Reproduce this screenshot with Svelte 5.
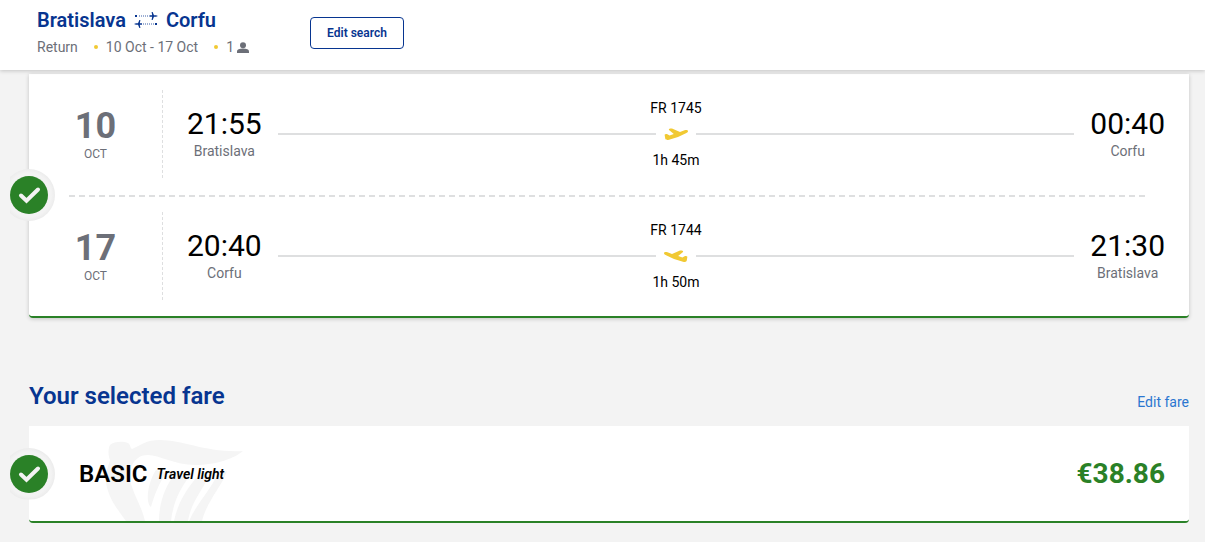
<script>
  const trip = {
    from: "Bratislava",
    to: "Corfu",
    type: "Return",
    dates: "10 Oct - 17 Oct",
    passengers: 1,
  };

  const legs = [
    {
      day: "10",
      month: "OCT",
      departs: "21:55",
      from: "Bratislava",
      arrives: "00:40",
      to: "Corfu",
      flight: "FR 1745",
      duration: "1h 45m",
    },
    {
      day: "17",
      month: "OCT",
      departs: "20:40",
      from: "Corfu",
      arrives: "21:30",
      to: "Bratislava",
      flight: "FR 1744",
      duration: "1h 50m",
      inbound: true,
    },
  ];

  const fare = { name: "BASIC", tagline: "Travel light", price: "€38.86" };
</script>

{#snippet tick()}
  <span class="tick">
    <svg viewBox="0 0 38 38" width="38" height="38" aria-hidden="true">
      <circle cx="19" cy="19" r="19" fill="#2a8127" />
      <path
        d="M11 19.500l5.500 5.300L28 13.500"
        fill="none"
        stroke="#f3f3f3"
        stroke-width="4"
        stroke-linecap="round"
      />
    </svg>
  </span>
{/snippet}

<header class="header">
  <div class="trip">
    <h1 class="route">
      <span>{trip.from}</span>
      <svg viewBox="0 0 24 16" width="24" height="16" aria-hidden="true">
        <g fill="#073590">
          <path d="M1 3h2v2H1zM21 11h2v2h-2z" />
          <path d="M24 4l-2 .8h-2L18.600 8h-1l.6-3.200H16V3.200h2.200L17.600 0h1L20 3.200h2z" />
          <path d="M0 12l2-.8h2L5.400 8h1l-.6 3.200H8v1.600H5.800L6.400 16h-1L4 12.800H2z" />
        </g>
        <path
          d="M5 4h11M9 12h11"
          stroke="#073590"
          stroke-opacity=".4"
          stroke-width="2"
          stroke-dasharray="1 1"
        />
      </svg>
      <span>{trip.to}</span>
    </h1>
    <ul class="details">
      <li>{trip.type}</li>
      <li>{trip.dates}</li>
      <li>
        {trip.passengers}
        <svg viewBox="0 0 12 12" width="12" height="12" aria-label="passenger">
          <g fill="#6c6f78">
            <circle cx="6" cy="4.200" r="3" />
            <path d="M6 7.600c3.600 0 6 1 6 2.600V12H0v-1.800c0-1.600 2.400-2.600 6-2.600z" />
          </g>
        </svg>
      </li>
    </ul>
  </div>
  <button class="edit-search" type="button">Edit search</button>
</header>

<main>
  <section class="card flights">
    {#each legs as leg, i}
      {#if i > 0}
        <hr class="divider" />
      {/if}
      <div class="leg">
        <div class="date">
          <span class="day">{leg.day}</span>
          <span class="month">{leg.month}</span>
        </div>
        <div class="place">
          <span class="time">{leg.departs}</span>
          <span class="city">{leg.from}</span>
        </div>
        <div class="flight">
          <span>{leg.flight}</span>
          <div class="path">
            <svg
              class:inbound={leg.inbound}
              viewBox="0 0 24 12"
              width="24"
              height="12"
              aria-hidden="true"
            >
              <path
                d="M.6 6.800C1 6 2.500 5.800 3.400 6.300L5.600 7.400 9.800 5.900 5 2C4.400 1 6 .4 8 .6L16 4 20.500 2.300C22.300 1.700 24 2 24 3.200 24 4.200 22.800 4.900 21.400 5.500L14 9 5 11.700C3.200 12.200 1.800 12 1.300 10.800z"
                fill="#f1c933"
              />
            </svg>
          </div>
          <span>{leg.duration}</span>
        </div>
        <div class="place">
          <span class="time">{leg.arrives}</span>
          <span class="city">{leg.to}</span>
        </div>
      </div>
    {/each}
    {@render tick()}
  </section>

  <div class="fare-header">
    <h2>Your selected fare</h2>
    <a href="#fare">Edit fare</a>
  </div>

  <section class="card fare" id="fare">
    <svg class="harp" viewBox="0 0 138 82" width="138" height="82" aria-hidden="true">
      <g fill="#f5f5f5">
        <path
          d="M5 6C9 2 19 2 23 4C26 6 25 9 27 10C36 6 41 1 55 1C78 1 102 14 138 12C130 19 112 26 90 26C70 26 54 16 43 16C34 16 30 21 27 26C25 33 24 41 27 48C31 60 37 69 40 82H21C14 72 4 61 1 44C0 34 3 29 5 21C3 16 3 10 5 6z"
        />
        <path d="M51 31L61 34C54 44 49 57 46 68C40 63 43 43 51 31z" />
        <path d="M70 35L84 38C74 51 68 65 66 82H54C54 64 60 47 70 35z" />
        <path d="M92 38L104 37C96 53 86 64 83 82H69C73 63 82 50 92 38z" />
        <path d="M112 36L122 32C117 47 102 62 97 82H84C92 64 105 52 112 36z" />
      </g>
    </svg>
    <h3>{fare.name}</h3>
    <em>{fare.tagline}</em>
    <strong class="price">{fare.price}</strong>
    {@render tick()}
  </section>
</main>

<style>
  :global(body) {
    background: #f3f3f3;
    font-family: Roboto, "Liberation Sans", sans-serif;
    font-size: 14px;
    line-height: 20px;
    color: #000;
  }

  h1,
  h2,
  h3,
  ul,
  hr {
    margin: 0;
    padding: 0;
  }

  svg {
    display: block;
  }

  .header {
    position: relative;
    z-index: 1;
    display: flex;
    align-items: flex-start;
    padding: 8px 37px 13px;
    background: #fff;
    box-shadow: 0 1px 4px rgba(0, 0, 0, 0.2);
  }

  .trip {
    width: 273px;
  }

  .route {
    display: flex;
    align-items: center;
    gap: 8px;
    font-size: 20px;
    line-height: 24px;
    font-weight: 600;
    color: #073590;
  }

  .details {
    display: flex;
    margin-top: 5px;
    color: #6c6f78;
    list-style: none;
  }

  .details li {
    display: flex;
    align-items: center;
    gap: 3px;
  }

  .details li + li::before {
    content: "";
    width: 4px;
    height: 4px;
    margin: 0 5px 0 16px;
    border-radius: 50%;
    background: #f1c933;
  }

  .edit-search {
    box-sizing: border-box;
    width: 94px;
    height: 32px;
    margin-top: 9px;
    padding: 0;
    border: 1px solid #073590;
    border-radius: 4px;
    background: #fff;
    color: #073590;
    font: 600 12px Roboto, "Liberation Sans", sans-serif;
    cursor: pointer;
  }

  main {
    padding: 4px 16px 19px 29px;
  }

  .card {
    position: relative;
    background: #fff;
    border-bottom: 2px solid #2a8127;
    border-radius: 0 0 4px 4px;
  }

  .flights {
    padding: 16px 24px 16px 0;
    box-shadow: 0 1px 4px rgba(0, 0, 0, 0.2);
  }

  .leg {
    display: flex;
    height: 88px;
  }

  .divider {
    height: 2px;
    margin: 17px 16px 15px 40px;
    border: 0;
    background: repeating-linear-gradient(90deg, #dedfe0 0 6px, transparent 6px 10px);
  }

  .date {
    display: flex;
    flex-direction: column;
    align-items: center;
    justify-content: center;
    box-sizing: border-box;
    width: 134px;
    border-right: 1px dashed #dedfe0;
    color: #6c6f78;
  }

  .day {
    font-size: 36px;
    line-height: 40px;
    font-weight: 700;
  }

  .month {
    font-size: 12px;
    line-height: 16px;
  }

  .place {
    display: flex;
    flex-direction: column;
    align-items: center;
    padding-top: 14px;
  }

  .date + .place {
    margin-left: 24px;
  }

  .time {
    font-size: 30px;
    line-height: 40px;
  }

  .city {
    line-height: 14px;
    color: #6c6f78;
  }

  .flight {
    flex: 1;
    display: flex;
    flex-direction: column;
    align-items: center;
    justify-content: center;
    margin: 0 16px;
  }

  .path {
    display: flex;
    align-items: center;
    gap: 8px;
    align-self: stretch;
    height: 32px;
  }

  .path::before,
  .path::after {
    content: "";
    flex: 1;
    height: 2px;
    background: #dedfe0;
  }

  .inbound {
    transform: scaleX(-1);
  }

  .tick {
    position: absolute;
    top: 50%;
    left: -26px;
    box-sizing: border-box;
    width: 52px;
    height: 52px;
    padding: 7px;
    border-radius: 50%;
    background: radial-gradient(circle, #f3f3f3 22px, #ececec 26px);
    clip-path: inset(0 0 0 7px);
    transform: translateY(-50%);
  }

  .fare-header {
    display: flex;
    align-items: flex-end;
    justify-content: space-between;
    margin: 62px 0 14px;
  }

  h2 {
    font-size: 24px;
    line-height: 32px;
    font-weight: 600;
    color: #073590;
  }

  a {
    color: #2b76d0;
    text-decoration: none;
  }

  .fare {
    display: flex;
    align-items: center;
    gap: 9px;
    height: 95px;
    padding: 0 24px 0 50px;
  }

  h3 {
    position: relative;
    font-size: 24px;
    line-height: 32px;
    font-weight: 600;
  }

  em {
    position: relative;
    font-weight: 600;
  }

  .harp {
    position: absolute;
    bottom: 0;
    left: 76px;
  }

  .price {
    margin-left: auto;
    font-size: 28px;
    line-height: 32px;
    font-weight: 700;
    color: #2a8127;
  }
</style>
